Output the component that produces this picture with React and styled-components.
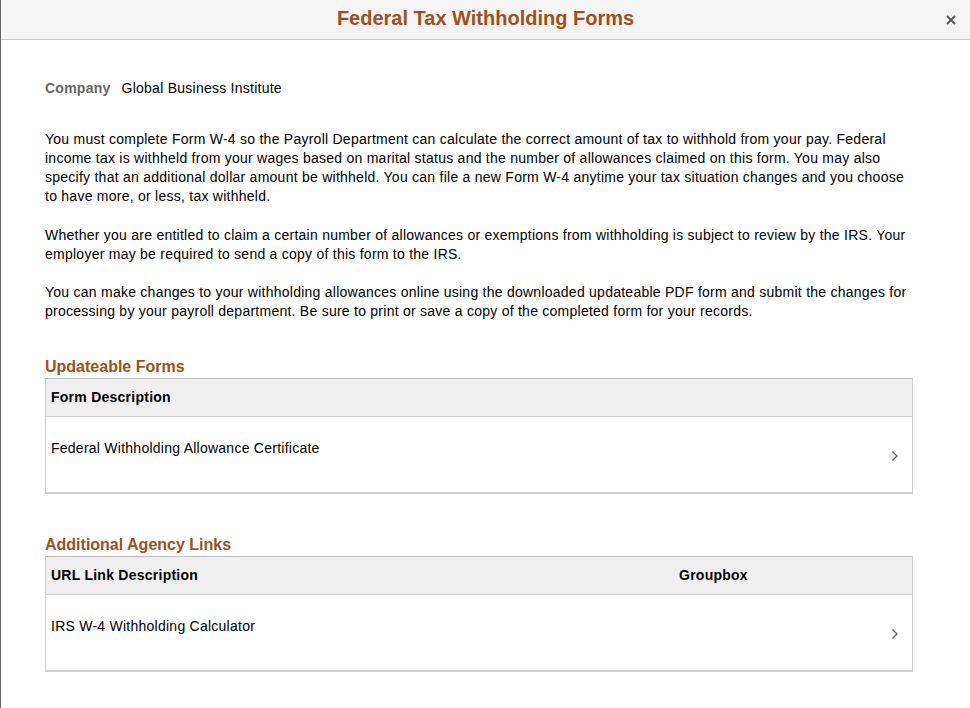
import React from 'react';
import styled, { createGlobalStyle } from 'styled-components';

const GlobalStyle = createGlobalStyle`
  html, body {
    margin: 0;
    padding: 0;
    background: #fff;
  }
  body {
    font-family: "Liberation Sans", Arial, sans-serif;
    color: #000;
  }
`;

const Page = styled.div`
  width: 970px;
  height: 708px;
  box-sizing: border-box;
  border-left: 1px solid #666;
  overflow: hidden;
`;

const Header = styled.div`
  height: 39px;
  background: #f5f5f5;
  border-bottom: 1px solid #c9c9c9;
  display: flex;
  align-items: center;
  justify-content: center;
  position: relative;
`;

const Title = styled.h1`
  margin: 0;
  font-size: 20px;
  font-weight: 700;
  color: #a0501a;
  transform: translateY(-1px);
`;

const CloseButton = styled.button`
  position: absolute;
  right: 9px;
  top: 10px;
  width: 20px;
  height: 20px;
  padding: 0;
  border: none;
  background: transparent;
  display: flex;
  align-items: center;
  justify-content: center;
  cursor: pointer;
`;

const Content = styled.div`
  padding: 38px 57px 0 44px;
  font-size: 14px;
  letter-spacing: 0.25px;
`;

const CompanyRow = styled.div`
  display: flex;
  align-items: center;
  gap: 11px;
  line-height: 20px;
  margin-bottom: 32px;
`;

const Label = styled.span`
  font-weight: 700;
  color: #666;
`;

const Paragraph = styled.p`
  margin: 0 0 19.5px;
  line-height: 19px;
  color: #000;
`;

const SectionTitle = styled.h2`
  margin: ${(p) => p.$top}px 0 1px;
  font-size: 16px;
  line-height: 20px;
  font-weight: 700;
  letter-spacing: 0;
  color: #a0501a;
`;

const Grid = styled.div`
  border: 1px solid #cfcfcf;
  border-top-color: #bdbdbd;
  border-bottom: 2px solid #cfcfcf;
`;

const HeadRow = styled.div`
  display: grid;
  grid-template-columns: ${(p) => p.$cols};
  height: 37px;
  align-items: center;
  background: #f0f0f0;
  border-bottom: 1px solid #cfcfcf;
`;

const HeadCell = styled.div`
  padding: 0 0 2px 5px;
  font-weight: 700;
`;

const Row = styled.div`
  display: flex;
  height: 75px;
  cursor: pointer;
`;

const Cell = styled.div`
  flex: 1;
  padding: 22px 5px 0;
  line-height: 19px;
`;

const Chevron = styled.div`
  width: 35px;
  display: flex;
  align-items: center;
  justify-content: center;
  padding-top: 3px;
`;

function ChevronIcon() {
  return (
    <svg width="8" height="12" viewBox="0 0 8 12">
      <polyline points="1.5,1.5 6,6 1.5,10.5" fill="none" stroke="#666" strokeWidth="1.4" />
    </svg>
  );
}

export default function App() {
  return (
    <>
      <GlobalStyle />
      <Page>
        <Header>
          <Title>Federal Tax Withholding Forms</Title>
          <CloseButton aria-label="Close">
            <svg width="10" height="10" viewBox="0 0 10 10">
              <path d="M1 1 L9 9 M9 1 L1 9" stroke="#555" strokeWidth="2" />
            </svg>
          </CloseButton>
        </Header>
        <Content>
          <CompanyRow>
            <Label>Company</Label>
            <span>Global Business Institute</span>
          </CompanyRow>
          <Paragraph>
            You must complete Form W-4 so the Payroll Department can calculate the correct amount of tax to withhold from your pay. Federal income tax is withheld from your wages based on marital status and the number of allowances claimed on this form. You may also specify that an additional dollar amount be withheld. You can file a new Form W-4 anytime your tax situation changes and you choose to have more, or less, tax withheld.
          </Paragraph>
          <Paragraph>
            Whether you are entitled to claim a certain number of allowances or exemptions from withholding is subject to review by the IRS. Your employer may be required to send a copy of this form to the IRS.
          </Paragraph>
          <Paragraph>
            You can make changes to your withholding allowances online using the downloaded updateable PDF form and submit the changes for processing by your payroll department. Be sure to print or save a copy of the completed form for your records.
          </Paragraph>

          <SectionTitle $top={36}>Updateable Forms</SectionTitle>
          <Grid>
            <HeadRow $cols="1fr">
              <HeadCell>Form Description</HeadCell>
            </HeadRow>
            <Row>
              <Cell>Federal Withholding Allowance Certificate</Cell>
              <Chevron><ChevronIcon /></Chevron>
            </Row>
          </Grid>

          <SectionTitle $top={41}>Additional Agency Links</SectionTitle>
          <Grid>
            <HeadRow $cols="628px 1fr">
              <HeadCell>URL Link Description</HeadCell>
              <HeadCell>Groupbox</HeadCell>
            </HeadRow>
            <Row>
              <Cell>IRS W-4 Withholding Calculator</Cell>
              <Chevron><ChevronIcon /></Chevron>
            </Row>
          </Grid>
        </Content>
      </Page>
    </>
  );
}
